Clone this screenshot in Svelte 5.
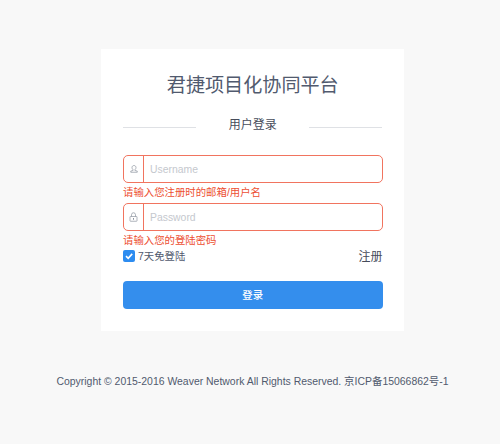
<script>
  let username = $state('');
  let password = $state('');
  let remember = $state(true);
</script>

<div class="page">
  <main class="card">
    <h1>君捷项目化协同平台</h1>
    <div class="divider"><span>用户登录</span></div>

    <form onsubmit={(e) => e.preventDefault()}>
      <div class="field">
        <span class="icon">
          <svg width="8" height="8" viewBox="0 0 16 16" fill="none" stroke="#8d939f" stroke-width="1.4">
            <path d="M6.2 9.6C4.8 8.600 4 6.900 4 5.200C4 2.700 5.700 1 8 1s4 1.700 4 4.200c0 1.700-.8 3.400-2.200 4.400v1.300l4.700 1.300V14.500H1.500V12.200l4.700-1.300z" />
          </svg>
        </span>
        <input type="text" placeholder="Username" bind:value={username} />
      </div>
      <p class="error">请输入您注册时的邮箱/用户名</p>

      <div class="field">
        <span class="icon">
          <svg width="9" height="10" viewBox="0 0 18 20" fill="none" stroke="#8d939f" stroke-width="1.4">
            <path d="M5 9V5.500a4 4 0 0 1 8 0V9" />
            <rect x="2" y="9" width="14" height="9.500" rx="1" />
            <path d="M9 12v3.500" stroke-width="2" />
          </svg>
        </span>
        <input type="password" placeholder="Password" bind:value={password} />
      </div>
      <p class="error">请输入您的登陆密码</p>

      <div class="options">
        <label>
          <input type="checkbox" bind:checked={remember} />
          <span class="box">
            {#if remember}
              <svg width="12" height="12" viewBox="0 0 12 12" fill="none" stroke="#fff" stroke-width="1.6">
                <path d="M3 6.100l2.200 2.200L9.200 3.900" />
              </svg>
            {/if}
          </span>
          <span class="remember">7天免登陆</span>
        </label>
        <a href="#register">注册</a>
      </div>

      <button type="submit">登录</button>
    </form>
  </main>
  <footer>Copyright © 2015-2016 Weaver Network All Rights Reserved. 京ICP备15066862号-1</footer>
</div>

<style>
  :global(body) {
    background: #f8f8f8;
  }
  .page {
    box-sizing: border-box;
    height: 444px;
    padding: 49px 0 0 5px;
    overflow: hidden;
    display: flex;
    flex-direction: column;
    align-items: center;
    background: #f8f8f8;
    color: #515a6e;
    font-family: 'Liberation Sans', 'Noto Sans CJK SC', sans-serif;
    font-size: 10.4px;
  }
  .card {
    box-sizing: border-box;
    width: 303px;
    height: 281.500px;
    padding: 23px 21.500px 0 22px;
    background: #fff;
  }
  h1 {
    margin: 0;
    font-size: 19.1px;
    line-height: 28px;
    font-weight: 400;
    text-align: center;
  }
  .divider {
    display: flex;
    justify-content: space-between;
    height: 20px;
    margin: 15px 0 20px;
    line-height: 21px;
    font-size: 12px;
    color: #464c5b;
  }
  .divider::before,
  .divider::after {
    content: '';
    width: 73px;
    height: 1px;
    margin-top: 12px;
    background: #dfe1e5;
  }
  .field {
    box-sizing: border-box;
    display: flex;
    height: 28px;
    border: 1px solid #f1745f;
    border-radius: 5px;
    background: #fff;
    overflow: hidden;
  }
  .icon {
    box-sizing: border-box;
    width: 20px;
    flex: none;
    display: flex;
    align-items: center;
    justify-content: center;
    border-right: 1px solid #f1745f;
  }
  .field input {
    flex: 1;
    min-width: 0;
    padding: 0 6px;
    border: 0;
    outline: 0;
    background: transparent;
    color: #515a6e;
    font: 10.400px 'Liberation Sans', sans-serif;
  }
  .field input::placeholder {
    color: #c5c8ce;
    opacity: 1;
  }
  .error {
    height: 20px;
    margin: 0;
    line-height: 19px;
    color: #ed4f32;
  }
  .options {
    display: flex;
    align-items: center;
    justify-content: space-between;
    height: 12px;
    margin: -1px 0 19px;
  }
  label {
    display: flex;
    align-items: center;
    gap: 3px;
  }
  label input {
    display: none;
  }
  .box {
    width: 12px;
    height: 12px;
    border-radius: 2px;
    background: #2d8cf0;
  }
  .box svg {
    display: block;
  }
  .remember,
  a {
    padding-bottom: 2px;
  }
  a {
    color: #464c5b;
    font-size: 12px;
    text-decoration: none;
  }
  button {
    display: block;
    width: 100%;
    height: 28px;
    padding: 0 0 2px;
    border: 0;
    border-radius: 4px;
    background: #348eed;
    color: #fff;
    font: 500 10.400px 'Liberation Sans', 'Noto Sans CJK SC', sans-serif;
  }
  footer {
    margin-top: 42.500px;
    line-height: 18px;
    font-size: 10.450px;
    white-space: nowrap;
  }
</style>
